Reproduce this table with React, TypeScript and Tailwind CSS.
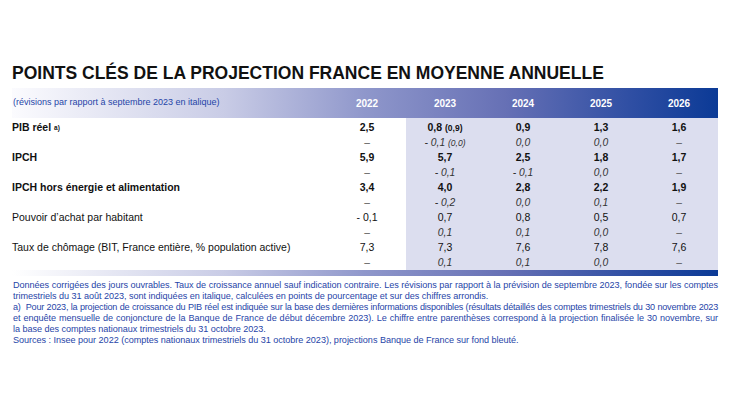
import React from 'react';

type Row = {
  label: string;
  bold: boolean;
  sup?: string;
  values: React.ReactNode[];
  revisions: React.ReactNode[];
};

const DASH = '–';

const rows: Row[] = [
  {
    label: 'PIB réel',
    bold: true,
    sup: 'a)',
    values: ['2,5', <>0,8 <span className="text-[8.5px]">(0,9)</span></>, '0,9', '1,3', '1,6'],
    revisions: [DASH, <>- 0,1 <span className="text-[8.5px]">(0,0)</span></>, '0,0', '0,0', DASH],
  },
  {
    label: 'IPCH',
    bold: true,
    values: ['5,9', '5,7', '2,5', '1,8', '1,7'],
    revisions: [DASH, '- 0,1', '- 0,1', '0,0', DASH],
  },
  {
    label: 'IPCH hors énergie et alimentation',
    bold: true,
    values: ['3,4', '4,0', '2,8', '2,2', '1,9'],
    revisions: [DASH, '- 0,2', '0,0', '0,1', DASH],
  },
  {
    label: "Pouvoir d’achat par habitant",
    bold: false,
    values: ['- 0,1', '0,7', '0,8', '0,5', '0,7'],
    revisions: [DASH, '0,1', '0,1', '0,0', DASH],
  },
  {
    label: 'Taux de chômage (BIT, France entière, % population active)',
    bold: false,
    values: ['7,3', '7,3', '7,6', '7,8', '7,6'],
    revisions: [DASH, '0,1', '0,1', '0,0', DASH],
  },
];

const years = ['2022', '2023', '2024', '2025', '2026'];

// footnote lines, broken where the source breaks them
const notes: { text: string; full: boolean; tight?: boolean }[] = [
  {
    text: 'Données corrigées des jours ouvrables. Taux de croissance annuel sauf indication contraire. Les révisions par rapport à la prévision de septembre 2023, fondée sur les comptes',
    full: true,
  },
  {
    text: 'trimestriels du 31 août 2023, sont indiquées en italique, calculées en points de pourcentage et sur des chiffres arrondis.',
    full: false,
  },
  {
    text: 'a)\u00a0 Pour 2023, la projection de croissance du PIB réel est indiquée sur la base des dernières informations disponibles (résultats détaillés des comptes trimestriels du 30 novembre 2023',
    full: true,
    tight: true,
  },
  {
    text: 'et enquête mensuelle de conjoncture de la Banque de France de début décembre 2023). Le chiffre entre parenthèses correspond à la projection finalisée le 30 novembre, sur',
    full: true,
  },
  { text: 'la base des comptes nationaux trimestriels du 31 octobre 2023.', full: false },
  {
    text: 'Sources : Insee pour 2022 (comptes nationaux trimestriels du 31 octobre 2023), projections Banque de France sur fond bleuté.',
    full: false,
  },
];

const App: React.FC = () => {
  return (
    <div
      className="w-[730px] h-[410px] bg-white px-[12px] pt-[63px]"
      style={{ fontFamily: '"Liberation Sans", Arial, sans-serif' }}
    >
      <h1 className="text-[17.5px] leading-[20px] font-bold text-[#111]">
        POINTS CLÉS DE LA PROJECTION FRANCE EN MOYENNE ANNUELLE
      </h1>

      <div className="mt-[5px] w-[706px]">
        {/* header band */}
        <div className="grid grid-cols-[316px_78px_78px_78px_78px_78px] h-[30px] items-center bg-[linear-gradient(to_right,#fbfbfe_0%,#c9cce6_30%,#8f97cb_50%,#6670b5_70%,#2e4ea3_88%,#0b3a96_100%)]">
          <div className="text-[9px] text-[#1f45a8] pl-[1px]">
            (révisions par rapport à septembre 2023 en italique)
          </div>
          {years.map((y) => (
            <div key={y} className="text-center text-[10px] font-bold text-white">
              {y}
            </div>
          ))}
        </div>

        {/* body */}
        <div className="grid grid-cols-[316px_78px_78px_78px_78px_78px]">
          <div className="h-[2px] col-span-2" />
          <div className="h-[2px] col-span-4 bg-[#dcdeef]" />
          {rows.map((r) => (
            <React.Fragment key={r.label}>
              <div
                className={`h-[15px] leading-[15px] text-[10.5px] text-[#111] ${r.bold ? 'font-bold' : ''}`}
              >
                {r.label}
                {r.sup && (
                  <sup className="text-[6.5px] font-bold ml-[3px] relative top-[-1px]">{r.sup}</sup>
                )}
              </div>
              {r.values.map((v, i) => (
                <div
                  key={i}
                  className={`h-[15px] leading-[15px] text-center text-[10.5px] text-[#111] ${r.bold ? 'font-bold' : ''} ${i > 0 ? 'bg-[#dcdeef]' : ''}`}
                >
                  {v}
                </div>
              ))}
              <div className="h-[15px]" />
              {r.revisions.map((v, i) => (
                <div
                  key={i}
                  className={`h-[15px] leading-[15px] text-center text-[10.3px] ${v === DASH ? 'text-[#555]' : 'italic text-[#333]'} ${i > 0 ? 'bg-[#dcdeef]' : ''}`}
                >
                  {v}
                </div>
              ))}
            </React.Fragment>
          ))}
        </div>

        {/* bottom band */}
        <div className="h-[6px] bg-[linear-gradient(to_right,#ffffff_0%,#c9cce6_30%,#8f97cb_50%,#6670b5_70%,#2e4ea3_88%,#0b3a96_100%)]" />

        <div className="mt-[4px] text-[9.1px] leading-[11px] text-[#1f45a8] pl-[1px]">
          {notes.map((n, i) => (
            <div
              key={i}
              className={`whitespace-nowrap ${n.full ? 'text-justify [text-align-last:justify]' : ''} ${n.tight ? 'tracking-[-0.22px]' : 'tracking-[-0.04px]'}`}
            >
              {n.text}
            </div>
          ))}
        </div>
      </div>
    </div>
  );
};

export default App;
